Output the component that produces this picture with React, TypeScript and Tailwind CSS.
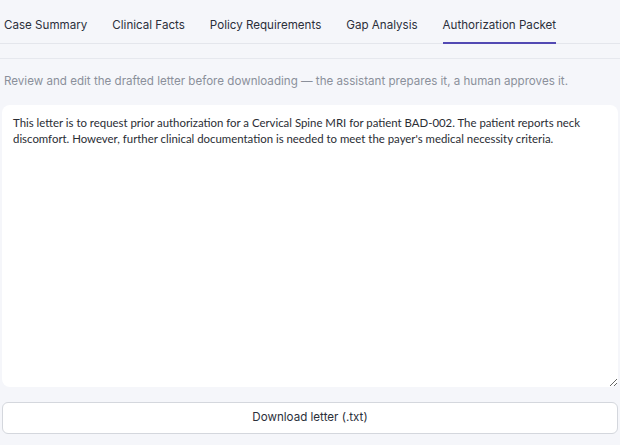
import { useState } from 'react';

// Authorization packet review tab

const TABS = ['Case Summary', 'Clinical Facts', 'Policy Requirements', 'Gap Analysis', 'Authorization Packet'];

const LETTER =
  "This letter is to request prior authorization for a Cervical Spine MRI for patient BAD-002. The patient reports neck discomfort. However, further clinical documentation is needed to meet the payer's medical necessity criteria.";

export default function App() {
  const [active, setActive] = useState('Authorization Packet');
  const [letter, setLetter] = useState(LETTER);

  return (
    <div className="min-h-[445px] w-[620px] bg-[#f5f6fa] font-['Inter',sans-serif]">
      <div className="flex gap-[25px] border-b border-[#e4e6ec] px-1">
        {TABS.map((t) => (
          <button
            key={t}
            onClick={() => setActive(t)}
            className={
              'pt-[17px] pb-[9px] text-[11.6px] leading-4 border-b-2 -mb-px ' +
              (t === active ? 'border-[#5249b3] text-[#2b2f3a]' : 'border-transparent text-[#2b2f3a]')
            }
          >
            {t}
          </button>
        ))}
      </div>
      <div className="mt-[14px] border-t border-[#e6e8ee]" />

      <p className="mt-[14px] px-1 text-[11.6px] leading-4 text-[#8b909b]">
        Review and edit the drafted letter before downloading — the assistant prepares it, a human approves it.
      </p>

      <div className="px-[2px] pt-[16px]">
        <textarea
          value={letter}
          onChange={(e) => setLetter(e.target.value)}
          className="block h-[282px] w-full resize-y rounded-lg bg-white pl-[11px] pr-[22px] py-[10px] font-['Lato',sans-serif] text-[11.4px] leading-4 text-[#2a2d34] outline-none"
        />
        <button className="mt-[15px] h-[32px] w-full rounded-md border border-[#d4d7dd] bg-white text-[11.6px] text-[#2b2f3a]">
          Download letter (.txt)
        </button>
      </div>
    </div>
  );
}
